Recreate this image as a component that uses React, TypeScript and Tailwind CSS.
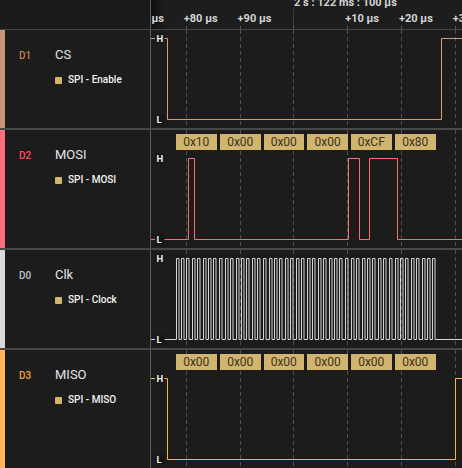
import React from 'react';

const GRID = [186.5, 240.5, 293.5, 347.5, 401.5, 455.5];
const BOX_X = [176, 220, 263.5, 307.3, 351, 395];

const TICKS = [
  { label: '+70 µs', x: 132.7 },
  { label: '+80 µs', x: 186.3 },
  { label: '+90 µs', x: 240.1 },
  { label: '+10 µs', x: 347.7 },
  { label: '+20 µs', x: 401.5 },
  { label: '+30 µs', x: 455.3 },
];

// clock: 6 bytes x 8 bits
const clockPath = () => {
  let d = 'M151 89.5';
  for (let b = 0; b < 6; b++) {
    const xs = 175.5 + b * 43.8;
    for (let i = 0; i < 8; i++) {
      const r = Math.round(xs + i * 5.4) + 0.5;
      const f = r + 2.5;
      d += ` H${r} V8.5 H${f} V89.5`;
    }
  }
  return d + ' H462';
};

type Channel = {
  id: string;
  name: string;
  anno: string;
  strip: string;
  idColor: string;
  line: string;
  tall: boolean;
  path: string;
  data?: string[];
};

const channels: Channel[] = [
  {
    id: 'D1',
    name: 'CS',
    anno: 'SPI - Enable',
    strip: 'bg-[#c99579]',
    idColor: 'text-[#c77f58]',
    line: '#d99b7b',
    tall: false,
    path: 'M151 8.5 H167.5 V89.5 H441.5 V8.5 H462',
  },
  {
    id: 'D2',
    name: 'MOSI',
    anno: 'SPI - MOSI',
    strip: 'bg-[#ff6e7c]',
    idColor: 'text-[#ff4d5a]',
    line: '#ff6b78',
    tall: true,
    path: 'M151 109.5 H188.5 V28.5 H194.5 V109.5 H348.5 V28.5 H359.5 V109.5 H369.5 V28.5 H397.5 V109.5 H462',
    data: ['0x10', '0x00', '0x00', '0x00', '0xCF', '0x80'],
  },
  {
    id: 'D0',
    name: 'Clk',
    anno: 'SPI - Clock',
    strip: 'bg-[#d9d9d9]',
    idColor: 'text-[#b9c3cf]',
    line: '#d4d4d4',
    tall: false,
    path: clockPath(),
  },
  {
    id: 'D3',
    name: 'MISO',
    anno: 'SPI - MISO',
    strip: 'bg-[#ffb558]',
    idColor: 'text-[#f0a33a]',
    line: '#ffb255',
    tall: true,
    path: 'M151 28.5 H167.5 V109.5 H455.5 V28.5 H462',
    data: ['0x00', '0x00', '0x00', '0x00', '0x00', '0x00'],
  },
];

const Level = ({ y, ch }: { y: number; ch: string }) => (
  <g>
    <rect x={155} y={y - 5} width={9.5} height={10} rx={1.5} fill="#151515" />
    <text x={156.5} y={y + 3.4} fontSize={9.5} fontWeight={700} fill="#eeeeee" fontFamily="Roboto, sans-serif">
      {ch}
    </text>
  </g>
);

const ChannelRow = ({ c }: { c: Channel }) => {
  const h = c.tall ? 118 : 98;
  const hi = c.tall ? 28.5 : 8.5;
  const lo = c.tall ? 109.5 : 89.5;
  return (
    <div className={`flex shrink-0 ${c.tall ? 'h-[118px]' : 'h-[98px]'}`}>
      {/* channel label */}
      <div className="flex w-[151px] shrink-0 border-r border-[#5a5a5a]">
        <div className={`w-[5px] h-full ${c.strip}`} />
        <div className="flex pl-[14px] pt-[18px]">
          <div className={`w-[36px] pt-[3px] text-[10px] leading-[10px] font-medium ${c.idColor}`}>{c.id}</div>
          <div className="flex flex-col">
            <div className="text-[13px] leading-[13px] text-[#e2e4e8]">{c.name}</div>
            <div className="mt-[14px] flex items-center gap-[6px]">
              <div className="w-[7px] h-[7px] rounded-[1px] bg-[#d1b46d]" />
              <span className="text-[10px] leading-[10px] font-medium text-[#f2f2f2]">{c.anno}</span>
            </div>
          </div>
        </div>
      </div>

      {/* waveform */}
      <div className="relative flex-1 overflow-hidden">
        <svg width={311} height={h} viewBox={`151 0 311 ${h}`} className="block">
          {GRID.map((x) => (
            <line key={x} x1={x} x2={x} y1={0} y2={h} stroke="#4f4f4f" strokeWidth={1} strokeDasharray="4 3" />
          ))}
          <path d={c.path} fill="none" stroke={c.line} strokeWidth={1} />
          <Level y={hi} ch="H" />
          <Level y={lo} ch="L" />
        </svg>
        {c.data?.map((v, i) => (
          <div
            key={i}
            className="absolute top-[4px] h-[16px] w-[40.5px] bg-[#d1b46d] text-center text-[12px] leading-[16px] text-[#3b3322]"
            style={{ left: BOX_X[i] - 151 }}
          >
            {v}
          </div>
        ))}
      </div>
    </div>
  );
};

export default function App() {
  return (
    <div className="w-[462px] h-[468px] overflow-hidden bg-[#1c1c1c] flex flex-col" style={{ fontFamily: 'Roboto, "Liberation Sans", sans-serif' }}>
      {/* time axis */}
      <div className="flex h-[30px] shrink-0 border-b border-[#464646] bg-[#1b1b1b]">
        <div className="w-[151px] shrink-0 border-r border-[#5a5a5a]" />
        <div className="relative flex-1 overflow-hidden bg-[#1d1d1d]">
          <div className="absolute inset-y-0 left-0 w-[14px] bg-gradient-to-r from-[#0f0f0f] to-transparent" />
          <svg width={311} height={29} viewBox="151 0 311 29" className="absolute inset-0">
            <line x1={293.5} x2={293.5} y1={9} y2={29} stroke="#3c3c3c" />
            {GRID.map((x) => (
              <line key={x} x1={x} x2={x} y1={26} y2={29} stroke="#5c5c5c" />
            ))}
          </svg>
          <span className="absolute top-[-3px] left-[143px] whitespace-nowrap text-[11px] leading-[11px] font-bold text-[#d4d4d4]">
            2 s : 122 ms : 100 µs
          </span>
          {TICKS.map((t) => (
            <span
              key={t.label}
              className="absolute top-[13px] whitespace-nowrap text-[11px] leading-[11px] font-bold text-[#d4d4d4]"
              style={{ left: t.x - 2.5 - 151 }}
            >
              {t.label}
            </span>
          ))}
        </div>
      </div>

      <div className="flex flex-col gap-[2px] bg-[#484848]">
        {channels.map((c) => (
          <div key={c.id} className="bg-[#1c1c1c]">
            <ChannelRow c={c} />
          </div>
        ))}
      </div>
    </div>
  );
}
